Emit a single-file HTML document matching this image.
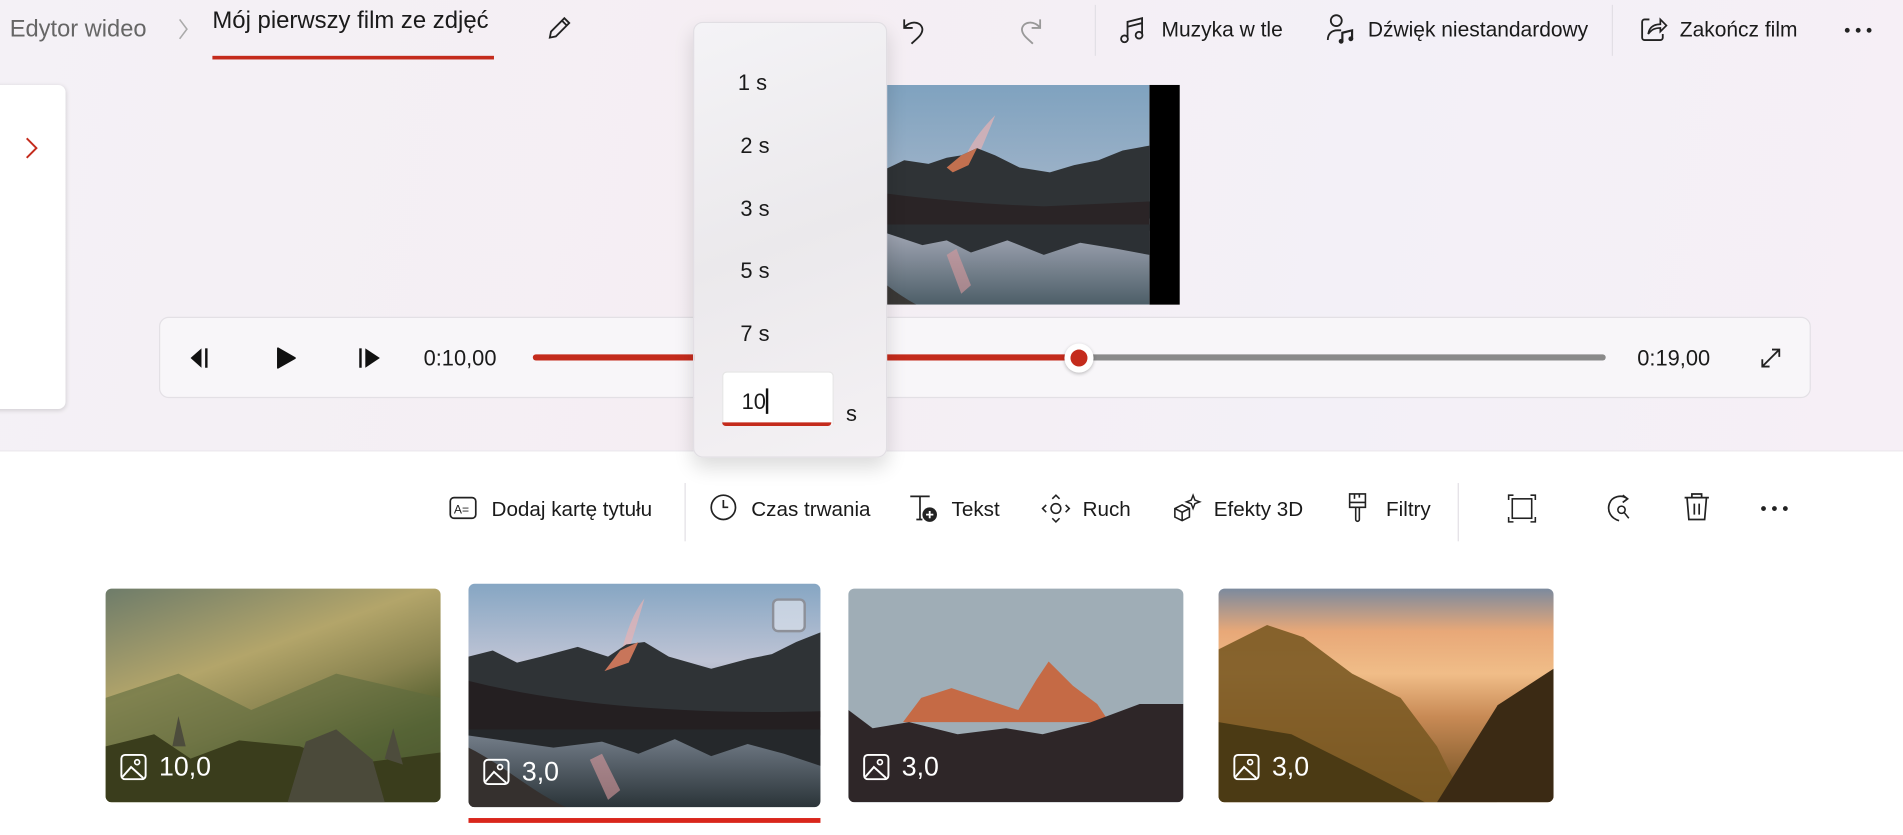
<!DOCTYPE html>
<html><head><meta charset="utf-8"><style>
html,body{margin:0;padding:0;width:1903px;height:834px;overflow:hidden;background:#fff}
#w{position:absolute;left:0;top:0;width:1568px;height:688px;transform:scale(1.2137);transform-origin:0 0;font-family:"Liberation Sans",sans-serif;color:#1a1a1a}
.a{position:absolute}
.t{position:absolute;font-size:18px;white-space:nowrap;line-height:1}
.tb{position:absolute;font-size:17px;white-space:nowrap;line-height:1;top:411px}
svg.i{position:absolute;overflow:visible}
.sep{position:absolute;width:1px;background:#e2dfe5}
.thumb{position:absolute;border-radius:5px;overflow:hidden}
.lbl{position:absolute;left:12px;bottom:16px;color:#fff;font-size:22px;display:flex;align-items:center;gap:10px}
</style></head><body><div id="w">
<div class="a" style="left:0;top:0;width:1568px;height:372px;background:linear-gradient(100deg,#f4f1f6 0%,#f5eef3 40%,#f3f0f7 70%,#f6eff6 100%)"></div>
<div class="a" style="left:0;top:371px;width:1568px;height:1px;background:#ece9ee"></div>

<!-- header -->
<div class="t" style="left:8px;top:15px;color:#666;font-size:19.5px">Edytor wideo</div>
<svg class="i" style="left:146px;top:15px" width="10" height="18"><path d="M2 1l6 8-6 8" fill="none" stroke="#aaa" stroke-width="1.3"/></svg>
<div class="t" style="left:175px;top:8px;font-size:19.7px">Mój pierwszy film ze zdjęć</div>
<div class="a" style="left:175px;top:46px;width:232px;height:3px;background:#c42b1c"></div>
<svg class="i" style="left:450px;top:12px" width="22" height="22"><path d="M3 19l1-5L15 3l4 4L8 18z M13 5l4 4" fill="none" stroke="#222" stroke-width="1.5"/></svg>
<svg class="i" style="left:741px;top:12px" width="24" height="26"><path d="M4 4v7h7 M4 11C8 5 18 5 19 12c0 5-5 8-9 12" fill="none" stroke="#222" stroke-width="1.5"/></svg>
<svg class="i" style="left:837px;top:12px" width="24" height="26"><path d="M20 4v7h-7 M20 11C16 5 6 5 5 12c0 5 5 8 9 12" fill="none" stroke="#999" stroke-width="1.5"/></svg>
<div class="sep" style="left:902px;top:4px;height:42px"></div>
<svg class="i" style="left:922px;top:13px" width="22" height="24"><path d="M7 18V5l12-3v13 M7 9l12-3" fill="none" stroke="#222" stroke-width="1.5"/><circle cx="4.5" cy="19" r="2.8" fill="none" stroke="#222" stroke-width="1.5"/><circle cx="16.5" cy="16" r="2.8" fill="none" stroke="#222" stroke-width="1.5"/></svg>
<div class="t" style="left:957px;top:16px;font-size:17.3px">Muzyka w tle</div>
<svg class="i" style="left:1092px;top:11px" width="26" height="26"><circle cx="9" cy="6" r="4.5" fill="none" stroke="#222" stroke-width="1.5"/><path d="M2 22c0-5 3-8 8-8h3" fill="none" stroke="#222" stroke-width="1.5"/><path d="M14 23v-7l8-2v7" fill="none" stroke="#222" stroke-width="1.8"/><circle cx="13" cy="23" r="2" fill="#222"/><circle cx="21" cy="21" r="2" fill="#222"/></svg>
<div class="t" style="left:1127px;top:16px;font-size:17.3px">Dźwięk niestandardowy</div>
<div class="sep" style="left:1328px;top:4px;height:42px"></div>
<svg class="i" style="left:1350px;top:12px" width="24" height="24"><path d="M9 4H5a2 2 0 0 0-2 2v13a2 2 0 0 0 2 2h13a2 2 0 0 0 2-2v-3" fill="none" stroke="#222" stroke-width="1.5"/><path d="M8 16c1-6 5-8 10-8V4l5 5-5 5v-3c-4 0-7 1-10 5z" fill="none" stroke="#222" stroke-width="1.4"/></svg>
<div class="t" style="left:1384px;top:16px;font-size:17.3px">Zakończ film</div>
<svg class="i" style="left:1519px;top:22px" width="26" height="6"><circle cx="3" cy="3" r="2" fill="#222"/><circle cx="12" cy="3" r="2" fill="#222"/><circle cx="21" cy="3" r="2" fill="#222"/></svg>

<!-- left panel -->
<div class="a" style="left:-8px;top:70px;width:62px;height:267px;background:#fff;border-radius:6px;box-shadow:0 1px 4px rgba(0,0,0,.15)"></div>
<svg class="i" style="left:20px;top:112px" width="12" height="20"><path d="M2 2l8 8-8 8" fill="none" stroke="#c42b1c" stroke-width="1.6"/></svg>

<!-- preview -->
<div class="a" style="left:947px;top:70px;width:25px;height:181px;background:#000"></div>
<svg class="a" style="left:680px;top:70px" width="267" height="181" viewBox="0 0 267 181">
<defs><linearGradient id="sk" x1="0" y1="0" x2="0" y2="1"><stop offset="0" stop-color="#7fa2bf"/><stop offset="1" stop-color="#c2c6d3"/></linearGradient>
<linearGradient id="wt" x1="0" y1="0" x2="0" y2="1"><stop offset="0" stop-color="#a9adbb"/><stop offset="1" stop-color="#4d5e68"/></linearGradient></defs>
<rect width="267" height="181" fill="url(#sk)"/>
<path d="M110 75C115 55 125 40 140 25 132 45 125 60 118 78Z" fill="#e7b2b4" opacity=".7"/>
<path d="M0 78L20 70 40 74 65 62 85 65 100 60 112 58 125 52 140 58 160 68 185 72 205 66 225 62 245 54 267 50V110H0Z" fill="#2f3336"/>
<path d="M100 68L112 58 125 52 118 66 105 72Z" fill="#c2704f"/>
<path d="M0 82C60 92 120 98 180 100L267 96V120H0Z" fill="#2a2426"/>
<rect x="0" y="115" width="267" height="66" fill="url(#wt)"/>
<path d="M0 115H267V140L240 135 210 130 180 140 150 128 120 138 100 128 80 132 50 122 0 125Z" fill="#2c3034"/>
<path d="M0 128C25 140 45 165 75 181H0Z" fill="#3a3836"/>
<path d="M108 135L120 165 112 172 100 140Z" fill="#d99a9c" opacity=".6"/>
</svg>

<!-- player -->
<div class="a" style="left:131px;top:261px;width:1359px;height:65px;background:#f8f6f9;border:1px solid #e3e0e5;border-radius:8px"></div>
<svg class="i" style="left:154px;top:285px" width="22" height="20"><path d="M12 2L3 10l9 8z" fill="#111"/><rect x="15" y="2" width="2" height="16" fill="#111"/></svg>
<svg class="i" style="left:226px;top:285px" width="20" height="20"><path d="M3 2l14 8-14 8z" fill="#111" stroke="#111" stroke-linejoin="round" stroke-width="1.5"/></svg>
<svg class="i" style="left:294px;top:285px" width="22" height="20"><rect x="2" y="2" width="2" height="16" fill="#111"/><path d="M7 2l12 8-12 8z" fill="#111"/></svg>
<div class="t" style="left:349px;top:286px">0:10,00</div>
<div class="a" style="left:439px;top:292px;width:450px;height:5px;background:#c42b1c;border-radius:3px"></div>
<div class="a" style="left:889px;top:292px;width:434px;height:5px;background:#8a8a8a;border-radius:3px"></div>
<div class="a" style="left:877px;top:283px;width:24px;height:24px;border-radius:50%;background:#fff;box-shadow:0 1px 3px rgba(0,0,0,.25)"></div>
<div class="a" style="left:882px;top:288px;width:14px;height:14px;border-radius:50%;background:#c42b1c"></div>
<div class="t" style="left:1349px;top:286px">0:19,00</div>
<svg class="i" style="left:1449px;top:285px" width="20" height="20"><path d="M3 17L17 3 M11 3h6v6 M3 11v6h6" fill="none" stroke="#222" stroke-width="1.5"/></svg>

<!-- popup -->
<div class="a" style="left:571px;top:18px;width:158px;height:357px;border-radius:8px;background:linear-gradient(160deg,#f4f3f6,#ebe9ec 50%,#f4f1f4);border:1px solid #e1dee3;box-shadow:0 8px 16px rgba(0,0,0,.14)"></div>
<div class="t" style="left:608px;top:59px">1 s</div>
<div class="t" style="left:610px;top:111px">2 s</div>
<div class="t" style="left:610px;top:163px">3 s</div>
<div class="t" style="left:610px;top:214px">5 s</div>
<div class="t" style="left:610px;top:266px">7 s</div>
<div class="a" style="left:595px;top:306px;width:90px;height:43px;background:#fff;border:1px solid #e5e5e5;border-bottom:none;border-radius:4px 4px 0 0"></div>
<div class="a" style="left:595px;top:348px;width:90px;height:3px;background:#c42b1c;border-radius:0 0 3px 3px"></div>
<div class="t" style="left:611px;top:320px">10<span style="display:inline-block;width:1.5px;height:21px;background:#111;vertical-align:-4px"></span></div>
<div class="t" style="left:697px;top:332px">s</div>

<!-- toolbar -->
<svg class="i" style="left:370px;top:409px" width="24" height="20"><rect x="1" y="1" width="21" height="17" rx="3" fill="none" stroke="#222" stroke-width="1.4"/><text x="4" y="14" font-size="10" font-family="Liberation Sans" fill="#222">A=</text></svg>
<div class="tb" style="left:405px">Dodaj kartę tytułu</div>
<div class="sep" style="left:564px;top:398px;height:48px"></div>
<svg class="i" style="left:585px;top:407px" width="22" height="22"><circle cx="11" cy="11" r="10" fill="none" stroke="#222" stroke-width="1.4"/><path d="M11 5v6h4" fill="none" stroke="#222" stroke-width="1.4"/></svg>
<div class="tb" style="left:619px">Czas trwania</div>
<svg class="i" style="left:749px;top:407px" width="26" height="24"><path d="M1 2h16 M9 2v19 M6 21h5" fill="none" stroke="#222" stroke-width="1.4"/><circle cx="17" cy="17" r="6" fill="#222"/><path d="M17 14v6M14 17h6" stroke="#fff" stroke-width="1.5"/></svg>
<div class="tb" style="left:784px">Tekst</div>
<svg class="i" style="left:858px;top:407px" width="24" height="24"><circle cx="12" cy="12" r="4" fill="none" stroke="#222" stroke-width="1.3"/><path d="M9 4l3-3 3 3M9 20l3 3 3-3M4 9l-3 3 3 3M20 9l3 3-3 3" fill="none" stroke="#222" stroke-width="1.3"/></svg>
<div class="tb" style="left:892px">Ruch</div>
<svg class="i" style="left:965px;top:406px" width="26" height="26"><path d="M3 13l6-3 6 3v7l-6 3-6-3z M3 13l6 3 6-3 M9 16v7" fill="none" stroke="#222" stroke-width="1.3"/><path d="M18 2l1.5 4 4 1.5-4 1.5-1.5 4-1.5-4-4-1.5 4-1.5z" fill="none" stroke="#222" stroke-width="1.2"/></svg>
<div class="tb" style="left:1000px">Efekty 3D</div>
<svg class="i" style="left:1110px;top:406px" width="18" height="26"><path d="M2 1h13v11H2z M2 8h13 M6 1v4 M10 1v3 M7 12v10a1.5 1.5 0 0 0 3 0V12" fill="none" stroke="#222" stroke-width="1.3"/></svg>
<div class="tb" style="left:1142px">Filtry</div>
<div class="sep" style="left:1201px;top:398px;height:48px"></div>
<svg class="i" style="left:1242px;top:407px" width="24" height="24"><rect x="4" y="4" width="16" height="16" fill="none" stroke="#222" stroke-width="1.3"/><path d="M1 5V1h4M19 1h4v4M23 19v4h-4M5 23H1v-4" fill="none" stroke="#222" stroke-width="1.3"/></svg>
<svg class="i" style="left:1322px;top:406px" width="26" height="26"><path d="M12 23C5 21 2 15 4 9 6 3 14 1 19 5 M15 2l4 3-4 3" fill="none" stroke="#222" stroke-width="1.4"/><circle cx="14" cy="14" r="3" fill="none" stroke="#222" stroke-width="1.3"/><path d="M16 16l4 5" stroke="#222" stroke-width="1.3"/></svg>
<svg class="i" style="left:1387px;top:406px" width="22" height="24"><path d="M1 4h20 M7 4V1h8v3 M3 4l1.5 18h13L19 4 M9 9v9M13 9v9" fill="none" stroke="#222" stroke-width="1.4"/></svg>
<svg class="i" style="left:1450px;top:416px" width="26" height="6"><circle cx="3" cy="3" r="2" fill="#222"/><circle cx="12" cy="3" r="2" fill="#222"/><circle cx="21" cy="3" r="2" fill="#222"/></svg>

<!-- thumbnails -->
<div class="thumb" style="left:87px;top:485px;width:276px;height:176px;background:linear-gradient(160deg,#6e7c6a 0%,#b3a56a 35%,#8a8450 55%,#4c5a2a 75%,#2d3314 100%)">
<svg width="276" height="176" style="position:absolute;left:0;top:0"><path d="M0 90L60 70 120 100 190 70 276 90V176H0Z" fill="#5d6a3e" opacity=".6"/><path d="M0 130L40 120 70 140 110 125 160 130 200 145 276 135V176H0Z" fill="#3a3d1c"/><path d="M150 176L165 126 190 116 220 141 230 176Z" fill="#4b4a3a"/><path d="M55 130L60 105 66 130Z M230 140L237 115 245 145Z" fill="#4d4c3c"/></svg>
<div class="lbl"><svg width="22" height="22"><rect x="1" y="1" width="20" height="20" rx="3" fill="none" stroke="#fff" stroke-width="1.6"/><circle cx="14" cy="7" r="2" fill="none" stroke="#fff" stroke-width="1.4"/><path d="M2 19l7-8 10 9" fill="none" stroke="#fff" stroke-width="1.6"/></svg>10,0</div></div>

<div class="thumb" style="left:386px;top:481px;width:290px;height:184px;background:linear-gradient(180deg,#86a6c3 0%,#bfc4d5 35%,#6e7883 70%,#2b3439 100%)">
<svg width="290" height="184" style="position:absolute;left:0;top:0"><path d="M125 60C130 40 135 25 145 12 140 30 135 45 130 62Z" fill="#e7b2b4" opacity=".7"/><path d="M0 60L20 55 40 65 60 60 90 52 115 60 130 50 145 48 165 60 200 70 230 62 250 58 270 48 290 40V110H0Z" fill="#2f3336"/><path d="M112 72L125 55 140 48 132 65Z" fill="#c8755a"/><path d="M0 80C80 100 180 108 290 105V125H0Z" fill="#241f21"/><path d="M0 120H290V150L260 140 230 132 200 142 170 128 140 140 110 130 70 135 0 125Z" fill="#25282b"/><path d="M0 135C30 150 50 170 80 184H0Z" fill="#35302e"/><path d="M110 140L125 170 115 178 100 145Z" fill="#d99a9c" opacity=".6"/></svg>
<div class="a" style="left:250px;top:12px;width:28px;height:28px;border-radius:5px;border:2px solid #8d9099;background:rgba(220,225,235,.7);box-sizing:border-box"></div>
<div class="lbl"><svg width="22" height="22"><rect x="1" y="1" width="20" height="20" rx="3" fill="none" stroke="#fff" stroke-width="1.6"/><circle cx="14" cy="7" r="2" fill="none" stroke="#fff" stroke-width="1.4"/><path d="M2 19l7-8 10 9" fill="none" stroke="#fff" stroke-width="1.6"/></svg>3,0</div></div>
<div class="a" style="left:386px;top:674px;width:290px;height:4px;background:#d9261c"></div>

<div class="thumb" style="left:699px;top:485px;width:276px;height:176px;background:#9fadb6">
<svg width="276" height="176" style="position:absolute;left:0;top:0"><path d="M45 110L60 90 85 82 115 92 140 100 155 75 165 60 185 80 205 95 215 110Z" fill="#c56a45"/><path d="M0 100L20 115 50 110 90 120 130 115 160 120 200 110 240 95 276 95V176H0Z" fill="#2e2628"/></svg>
<div class="lbl"><svg width="22" height="22"><rect x="1" y="1" width="20" height="20" rx="3" fill="none" stroke="#fff" stroke-width="1.6"/><circle cx="14" cy="7" r="2" fill="none" stroke="#fff" stroke-width="1.4"/><path d="M2 19l7-8 10 9" fill="none" stroke="#fff" stroke-width="1.6"/></svg>3,0</div></div>

<div class="thumb" style="left:1004px;top:485px;width:276px;height:176px;background:linear-gradient(180deg,#7c8a9e 0%,#e8a878 20%,#f0bd88 40%,#c88a55 60%,#6a4c1e 100%)">
<svg width="276" height="176" style="position:absolute;left:0;top:0"><path d="M0 50L40 30 70 40 110 70 150 90 180 130 200 170 230 176H0Z" fill="#7b5a24" opacity=".9"/><path d="M180 176L230 96 276 66V176Z" fill="#3b2a14"/><path d="M0 110L60 120 120 150 170 176H0Z" fill="#4b3a14"/></svg>
<div class="lbl"><svg width="22" height="22"><rect x="1" y="1" width="20" height="20" rx="3" fill="none" stroke="#fff" stroke-width="1.6"/><circle cx="14" cy="7" r="2" fill="none" stroke="#fff" stroke-width="1.4"/><path d="M2 19l7-8 10 9" fill="none" stroke="#fff" stroke-width="1.6"/></svg>3,0</div></div>
</div></body></html>
